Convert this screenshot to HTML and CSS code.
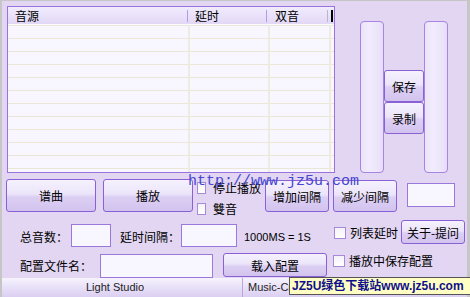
FILE: index.html
```html
<!DOCTYPE html>
<html>
<head>
  <meta charset="UTF-8">
  <title>Music Create</title>
  <link rel="stylesheet" href="styles.css">
</head>
<body>
  <div class="window">
    <div class="top">
      <div class="list">
        <div class="list-head">
          <div class="head-col col-src">音源</div>
          <div class="head-col col-delay">延时</div>
          <div class="head-col col-dual">双音</div>
          <div class="grip"></div>
        </div>
        <div class="list-body">
          <div class="body-col body-src"></div>
          <div class="body-col body-delay"></div>
          <div class="body-col body-dual"></div>
        </div>
      </div>
      <div class="side">
        <div class="track"></div>
        <div class="side-btns">
          <button class="btn side-btn">保存</button>
          <button class="btn side-btn">录制</button>
        </div>
        <div class="track"></div>
      </div>
    </div>

    <div class="row row-main">
      <button class="btn btn-big">谱曲</button>
      <button class="btn btn-big">播放</button>
      <div class="checks">
        <label class="check"><span class="box box-narrow"></span>停止播放</label>
        <label class="check"><span class="box box-narrow"></span>雙音</label>
      </div>
      <button class="btn btn-step">增加间隔</button>
      <button class="btn btn-step btn-step2">减少间隔</button>
      <div class="field field-count"></div>
    </div>

    <div class="row row-delay">
      <span class="label label-total">总音数：</span>
      <div class="field field-total"></div>
      <span class="label label-gap">延时间隔：</span>
      <div class="field field-gap"></div>
      <span class="note">1000MS = 1S</span>
      <label class="check check-row"><span class="box"></span>列表延时</label>
      <button class="btn btn-about">关于-提问</button>
    </div>

    <div class="row row-config">
      <span class="label label-file">配置文件名：</span>
      <div class="field field-file"></div>
      <button class="btn btn-load">载入配置</button>
      <label class="check check-save"><span class="box"></span>播放中保存配置</label>
    </div>

    <div class="status">
      <div class="panel panel-left">Light Studio</div>
      <div class="panel panel-right">Music-Create</div>
    </div>

    <!-- site watermark and banner drawn over the window -->
    <div class="watermark">http://www.jz5u.com</div>
    <div class="banner">JZ5U绿色下载站www.jz5u.com</div>
  </div>
</body>
</html>
```

FILE: styles.css
```css
body {
  margin: 0;
  width: 470px;
  height: 297px;
  overflow: hidden;
  font-family: "Noto Sans CJK SC", sans-serif;
  font-size: 12px;
  color: #000;
  background-color: #c6c6c6;
}
.window {
  position: relative;
  box-sizing: border-box;
  width: 470px;
  height: 297px;
  border-top: 1px solid #c6c6c6;
  border-left: 2px solid #c6c6c6;
  border-right: 3px solid #c6c6c6;
  background-color: #e2d6f2;
  display: flex;
  flex-direction: column;
}
.top {
  display: flex;
  padding: 5px 0 0 5px;
}
.list {
  width: 328px;
  height: 167px;
  box-sizing: border-box;
  border: 1px solid #9a72dc;
  background-color: #f8f6fe;
  display: flex;
  flex-direction: column;
}
.list-head {
  display: flex;
  height: 17px;
  flex-shrink: 0;
  background: linear-gradient(#f1ecfc, #e2d8f7);
  border-bottom: 1px solid #fbfaff;
}
.head-col {
  box-sizing: border-box;
  height: 12px;
  margin-top: 3px;
  line-height: 12px;
  border-right: 1px solid #b797ea;
}
.col-src {
  width: 180px;
  padding-left: 7px;
}
.col-delay {
  width: 79px;
  padding-left: 7px;
}
.col-dual {
  width: 61px;
  padding-left: 8px;
  border-right-color: #b8b8c8;
}
.grip {
  width: 2px;
  height: 12px;
  margin: 3px 0 0 3px;
  background-color: #000;
}
.list-body {
  flex: 1;
  display: flex;
  background-image: repeating-linear-gradient(to bottom, #ebe7d6 0 1px, transparent 1px 13px);
}
.body-col {
  box-sizing: border-box;
  border-right: 2px solid #eeebe1;
}
.body-src {
  width: 182px;
}
.body-delay {
  width: 80px;
}
.body-dual {
  width: 61px;
}
.side {
  display: flex;
  margin-left: 25px;
}
.track {
  width: 24px;
  height: 152px;
  margin-top: 15px;
  box-sizing: border-box;
  border: 1px solid #a783e6;
  border-radius: 4px;
  background: linear-gradient(to right, #ebe3f9, #f1ecfc 35%, #ede6fa 70%, #e6ddf7);
}
.side-btns {
  display: flex;
  flex-direction: column;
  margin-top: 64px;
}
.btn {
  box-sizing: border-box;
  padding: 0;
  border: 1px solid #8a60d6;
  border-radius: 3px;
  background: linear-gradient(#f5f1fd, #ece5fa 45%, #dccff3 55%, #d2c3ee);
  font-family: inherit;
  font-size: 12px;
  color: #000;
}
.side-btn {
  width: 40px;
  height: 32px;
}
.row {
  display: flex;
  align-items: flex-start;
  flex-shrink: 0;
}
.row-main {
  height: 33px;
  margin-top: 6px;
  padding-left: 4px;
}
.btn-big {
  width: 90px;
  height: 33px;
}
.btn-big + .btn-big {
  margin-left: 7px;
}
.checks {
  width: 68px;
  margin: 3px 0 0 4px;
  display: flex;
  flex-direction: column;
  gap: 9px;
}
.check {
  display: flex;
  align-items: center;
  height: 12px;
  line-height: 12px;
  white-space: nowrap;
}
.box {
  box-sizing: border-box;
  width: 12px;
  height: 12px;
  margin-right: 4px;
  border: 1px solid #a68ad8;
  background: linear-gradient(#f4f2f8, #ffffff);
}
.box-narrow {
  width: 9px;
  margin-right: 7px;
}
.btn-step {
  width: 64px;
  height: 32px;
  margin-top: 1px;
}
.btn-step2 {
  margin-left: 4px;
}
.field {
  box-sizing: border-box;
  border: 1px solid #9b78dc;
  background-color: #f8f6fe;
}
.field-count {
  width: 48px;
  height: 24px;
  margin: 4px 0 0 10px;
}
.row-delay {
  height: 27px;
  margin-top: 8px;
  padding-left: 18px;
}
.label {
  line-height: 12px;
  margin-top: 11px;
  white-space: nowrap;
}
.label-total {
  width: 51px;
}
.field-total {
  width: 40px;
  height: 23px;
  margin-top: 4px;
}
.label-gap {
  width: 61px;
  margin-left: 9px;
}
.field-gap {
  width: 56px;
  height: 23px;
  margin-top: 4px;
}
.note {
  width: 90px;
  margin: 11px 0 0 7px;
  font-family: "Liberation Sans", sans-serif;
  font-size: 11px;
  line-height: 12px;
}
.check-row {
  width: 67px;
  margin-top: 7px;
}
.btn-about {
  width: 64px;
  height: 24px;
}
.row-config {
  height: 25px;
  margin-top: 6px;
  padding-left: 18px;
}
.label-file {
  width: 80px;
  margin-top: 7px;
}
.field-file {
  width: 113px;
  height: 24px;
  margin-top: 1px;
}
.btn-load {
  width: 104px;
  height: 24px;
  margin-left: 10px;
}
.check-save {
  margin: 2px 0 0 6px;
}
.status {
  display: flex;
  height: 19px;
  flex-shrink: 0;
  background: linear-gradient(#f6f3fd, #e8e0f8 50%, #dbcff1);
  font-family: "Liberation Sans", sans-serif;
  font-size: 11px;
  line-height: 19px;
  color: #222;
}
.panel-left {
  box-sizing: border-box;
  width: 241px;
  padding-left: 84px;
  border-right: 1px solid #b9a6dc;
}
.panel-right {
  padding-left: 5px;
}
.watermark {
  position: absolute;
  left: 186px;
  top: 173px;
  font-family: "Liberation Mono", monospace;
  font-size: 15px;
  line-height: 15px;
  color: #4646d0;
}
.banner {
  position: absolute;
  left: 287px;
  right: -3px;
  top: 276px;
  height: 18px;
  box-sizing: border-box;
  padding-left: 2px;
  border: 1px solid #555;
  border-right: none;
  background-color: #ffffc4;
  font-family: "Liberation Sans", "Noto Sans CJK SC", sans-serif;
  font-size: 12px;
  font-weight: bold;
  line-height: 16px;
  color: #10108c;
  white-space: nowrap;
  overflow: hidden;
}
```
